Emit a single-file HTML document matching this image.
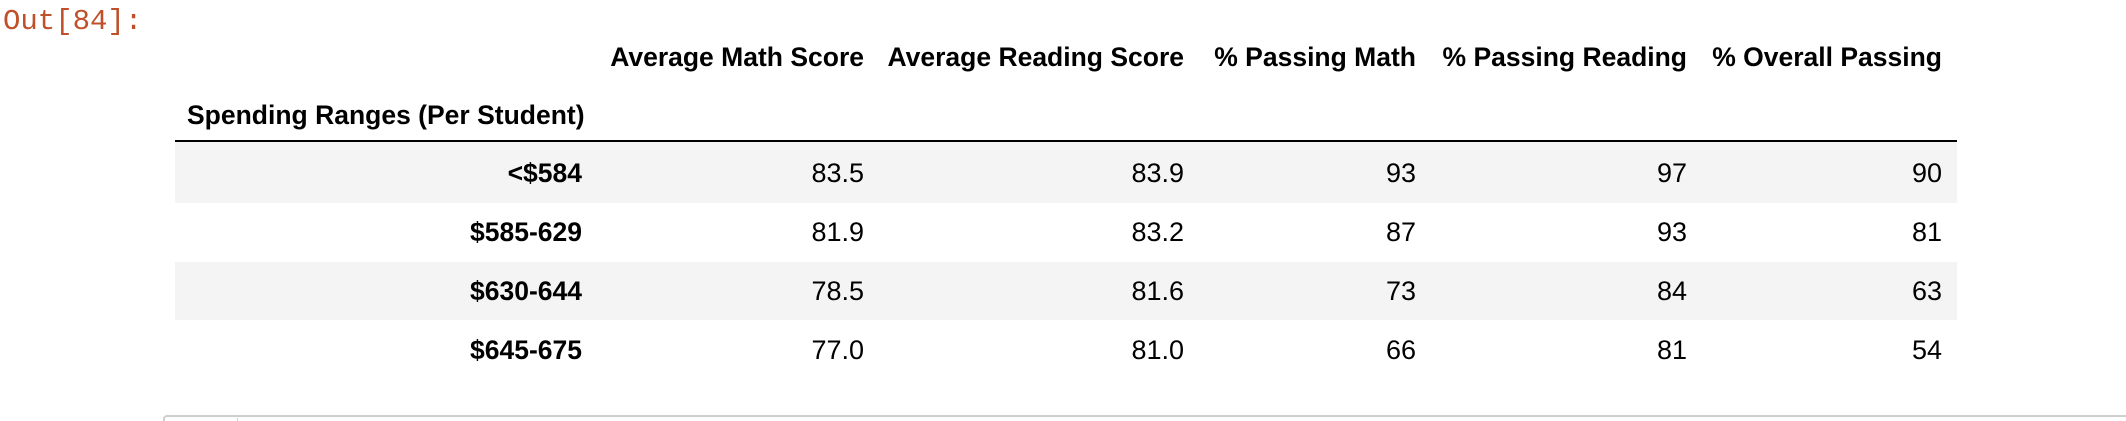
<!DOCTYPE html>
<html><head><style>
html,body{margin:0;width:2126px;height:421px;overflow:hidden}
body{background:#fff;position:relative;font-family:"Liberation Sans",Arial,sans-serif;color:#000}
.a{position:absolute;white-space:nowrap}
.out{left:3px;top:5px;font-family:"Liberation Mono",monospace;font-size:29px;color:#c0502a}
.h{font-weight:bold;font-size:26.5px;line-height:30px}
.n{font-size:27px;line-height:30px}
.r{text-align:right}
.band{position:absolute;left:175px;width:1782px;background:#f4f4f4}
</style></head><body>
<div class="a out">Out[84]:</div>
<div class="band" style="top:142px;height:61px"></div>
<div class="band" style="top:262px;height:58px"></div>
<div class="a" style="left:175px;top:140px;width:1782px;height:2px;background:#000"></div>

<div class="a h r" style="right:1262px;top:42px">Average Math Score</div>
<div class="a h r" style="right:942px;top:42px">Average Reading Score</div>
<div class="a h r" style="right:710px;top:42px">% Passing Math</div>
<div class="a h r" style="right:439px;top:42px">% Passing Reading</div>
<div class="a h r" style="right:184px;top:42px">% Overall Passing</div>
<div class="a h" style="left:187px;top:100px">Spending Ranges (Per Student)</div>

<div class="a h r" style="right:1544px;top:158px">&lt;$584</div>
<div class="a h r" style="right:1544px;top:217px">$585-629</div>
<div class="a h r" style="right:1544px;top:276px">$630-644</div>
<div class="a h r" style="right:1544px;top:335px">$645-675</div>

<div class="a n r" style="right:1262px;top:158px">83.5</div>
<div class="a n r" style="right:942px;top:158px">83.9</div>
<div class="a n r" style="right:710px;top:158px">93</div>
<div class="a n r" style="right:439px;top:158px">97</div>
<div class="a n r" style="right:184px;top:158px">90</div>

<div class="a n r" style="right:1262px;top:217px">81.9</div>
<div class="a n r" style="right:942px;top:217px">83.2</div>
<div class="a n r" style="right:710px;top:217px">87</div>
<div class="a n r" style="right:439px;top:217px">93</div>
<div class="a n r" style="right:184px;top:217px">81</div>

<div class="a n r" style="right:1262px;top:276px">78.5</div>
<div class="a n r" style="right:942px;top:276px">81.6</div>
<div class="a n r" style="right:710px;top:276px">73</div>
<div class="a n r" style="right:439px;top:276px">84</div>
<div class="a n r" style="right:184px;top:276px">63</div>

<div class="a n r" style="right:1262px;top:335px">77.0</div>
<div class="a n r" style="right:942px;top:335px">81.0</div>
<div class="a n r" style="right:710px;top:335px">66</div>
<div class="a n r" style="right:439px;top:335px">81</div>
<div class="a n r" style="right:184px;top:335px">54</div>

<div class="a" style="left:163px;top:415px;width:1963px;height:6px;border:2px solid #cfcfcf;border-bottom:none;border-right:none;border-radius:4px 0 0 0;box-sizing:border-box"></div>
<div class="a" style="left:237px;top:418px;width:1px;height:3px;background:#ccc"></div>
</body></html>
